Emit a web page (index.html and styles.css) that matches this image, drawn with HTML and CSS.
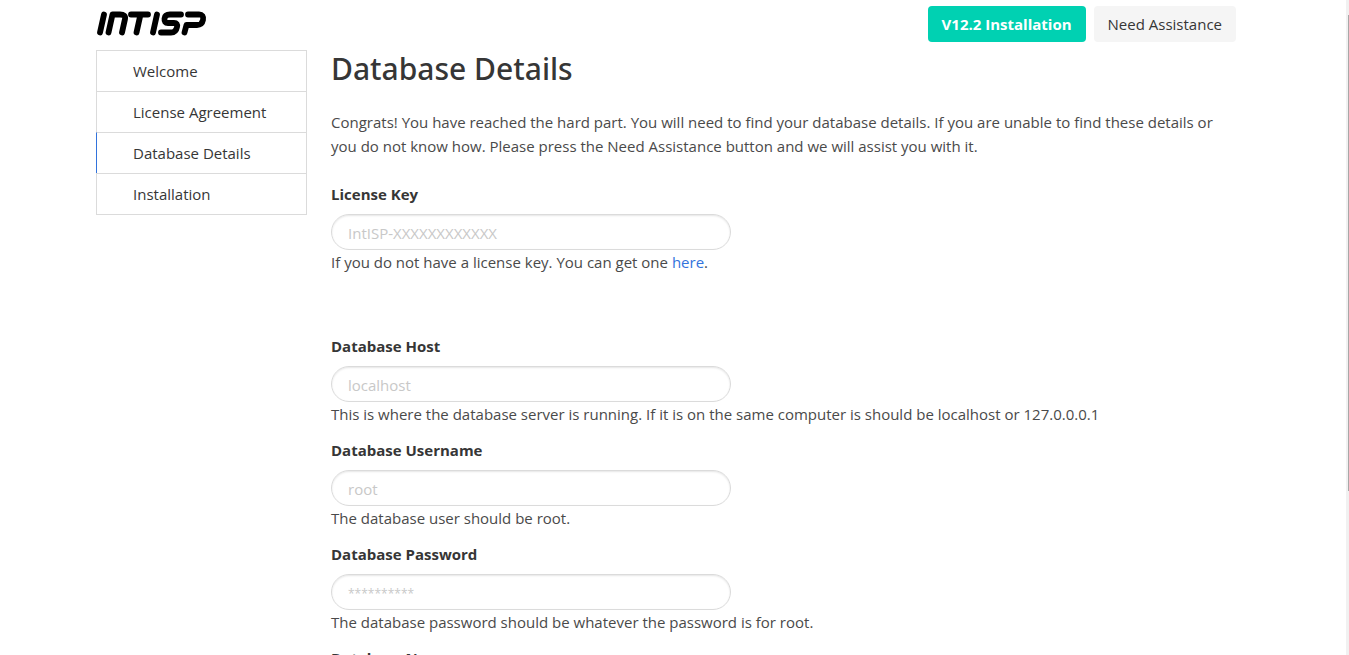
FILE: index.html
```html
<!DOCTYPE html>
<html lang="en">
<head>
<meta charset="utf-8">
<title>IntISP Installation</title>
<link rel="stylesheet" href="styles.css">
</head>
<body>
<div class="container">
  <header class="topbar">
    <svg class="logo" width="112" height="28" viewBox="0 0 112 28" role="img" aria-label="IntISP">
      <g fill="none" stroke="#000" stroke-width="5.8" stroke-linecap="round" stroke-linejoin="round">
        <path d="M8 5.5L4 23.5"/>
        <path d="M12.5 23.5L16.5 5.5H24Q30 5.5 29 10L26 23.5"/>
        <path d="M35 5.5H52M44.5 5.5L40.5 23.5"/>
        <path d="M61 5.5L57 23.5"/>
        <path d="M85 5.5H74Q69 5.5 68.500 9.500Q68 14 72 14H78Q82 14 81 18Q80 23.5 75 23.5H65"/>
        <path d="M88.5 23.5L90.500 16H101Q106 16 107 11Q108 5.5 103 5.5H92"/>
      </g>
    </svg>
    <div class="buttons">
      <button class="button button-primary" type="button">V12.2 Installation</button>
      <button class="button" type="button">Need Assistance</button>
    </div>
  </header>
  <div class="columns">
    <nav class="steps">
      <a class="step" href="#welcome">Welcome</a>
      <a class="step" href="#license">License Agreement</a>
      <a class="step step-active" href="#database">Database Details</a>
      <a class="step" href="#install">Installation</a>
    </nav>
    <main class="content">
      <h1 class="title">Database Details</h1>
      <p class="intro">Congrats! You have reached the hard part. You will need to find your database details. If you are unable to find these details or you do not know how. Please press the Need Assistance button and we will assist you with it.</p>
      <form class="form">
        <div class="field field-license">
          <label class="label" for="key">License Key</label>
          <input class="input" id="key" type="text" placeholder="IntISP-XXXXXXXXXXXX">
          <p class="help">If you do not have a license key. You can get one <a class="link" href="#key">here</a>.</p>
        </div>
        <div class="field">
          <label class="label" for="host">Database Host</label>
          <input class="input" id="host" type="text" placeholder="localhost">
          <p class="help">This is where the database server is running. If it is on the same computer is should be localhost or 127.0.0.0.1</p>
        </div>
        <div class="field">
          <label class="label" for="user">Database Username</label>
          <input class="input" id="user" type="text" placeholder="root">
          <p class="help">The database user should be root.</p>
        </div>
        <div class="field">
          <label class="label" for="password">Database Password</label>
          <input class="input input-password" id="password" type="password" placeholder="**********">
          <p class="help">The database password should be whatever the password is for root.</p>
        </div>
        <div class="field">
          <label class="label" for="name">Database Name</label>
          <input class="input" id="name" type="text">
        </div>
      </form>
    </main>
  </div>
</div>
<div class="scrollbar"><div class="thumb"></div></div>
</body>
</html>
```
FILE: styles.css
```css
* {
  box-sizing: border-box;
  margin: 0;
}
body {
  height: 100vh;
  padding-right: 5px;
  overflow: hidden;
  background: #fff;
  color: #4a4a4a;
  font: 15px/24px "Open Sans", "Noto Sans", sans-serif;
}
.container {
  max-width: 1152px;
  margin: 0 auto;
}
.topbar {
  display: flex;
  justify-content: space-between;
  padding: 6px 12px 8px 0;
}
.logo {
  margin-top: 3px;
}
.buttons {
  display: flex;
  gap: 8px;
}
.button {
  height: 36px;
  padding: 0 14px;
  border: 0;
  border-radius: 4px;
  background: #f5f5f5;
  color: #363636;
  font: inherit;
}
.button-primary {
  background: #00d1b2;
  color: #fff;
  font-weight: 700;
}
.columns {
  display: grid;
  grid-template-columns: 211px 1fr;
  gap: 24px;
  align-items: start;
}
.steps {
  border: 1px solid #dbdbdb;
  border-top: 0;
  border-left: 0;
}
.step {
  display: block;
  padding: 8px 36px;
  border-top: 1px solid #dbdbdb;
  border-left: 1px solid #dbdbdb;
  color: #363636;
  text-decoration: none;
}
.step-active {
  border-left-color: #3273dc;
}
.title {
  padding-top: 2px;
  margin-bottom: 24px;
  color: #363636;
  font-family: "Noto Sans", "Open Sans", sans-serif;
  font-size: 30px;
  font-weight: 500;
  line-height: 34px;
}
.intro {
  margin-bottom: 24px;
  padding-right: 24px;
}
.field {
  margin-bottom: 12px;
}
.field-license {
  margin-bottom: 60px;
}
.label {
  display: block;
  margin-bottom: 8px;
  color: #363636;
  font-weight: 700;
}
.input {
  display: block;
  width: 400px;
  max-width: 100%;
  height: 36px;
  padding: 2px 16px 0;
  border: 1px solid #dbdbdb;
  border-radius: 18px;
  background: #fff;
  box-shadow: inset 0 1px 2px rgba(10, 10, 10, 0.1);
  color: #363636;
  font: inherit;
}
.input::placeholder {
  color: #c8c8c8;
}
.input-password {
  font-size: 12px;
}
.link {
  color: #3273dc;
  text-decoration: none;
}
.scrollbar {
  position: fixed;
  top: 0;
  right: 0;
  bottom: 0;
  width: 3px;
  padding: 15px 0 0 2px;
  background: #f1f1f1;
}
.thumb {
  height: 476px;
  background: #a8a8a8;
}
```
